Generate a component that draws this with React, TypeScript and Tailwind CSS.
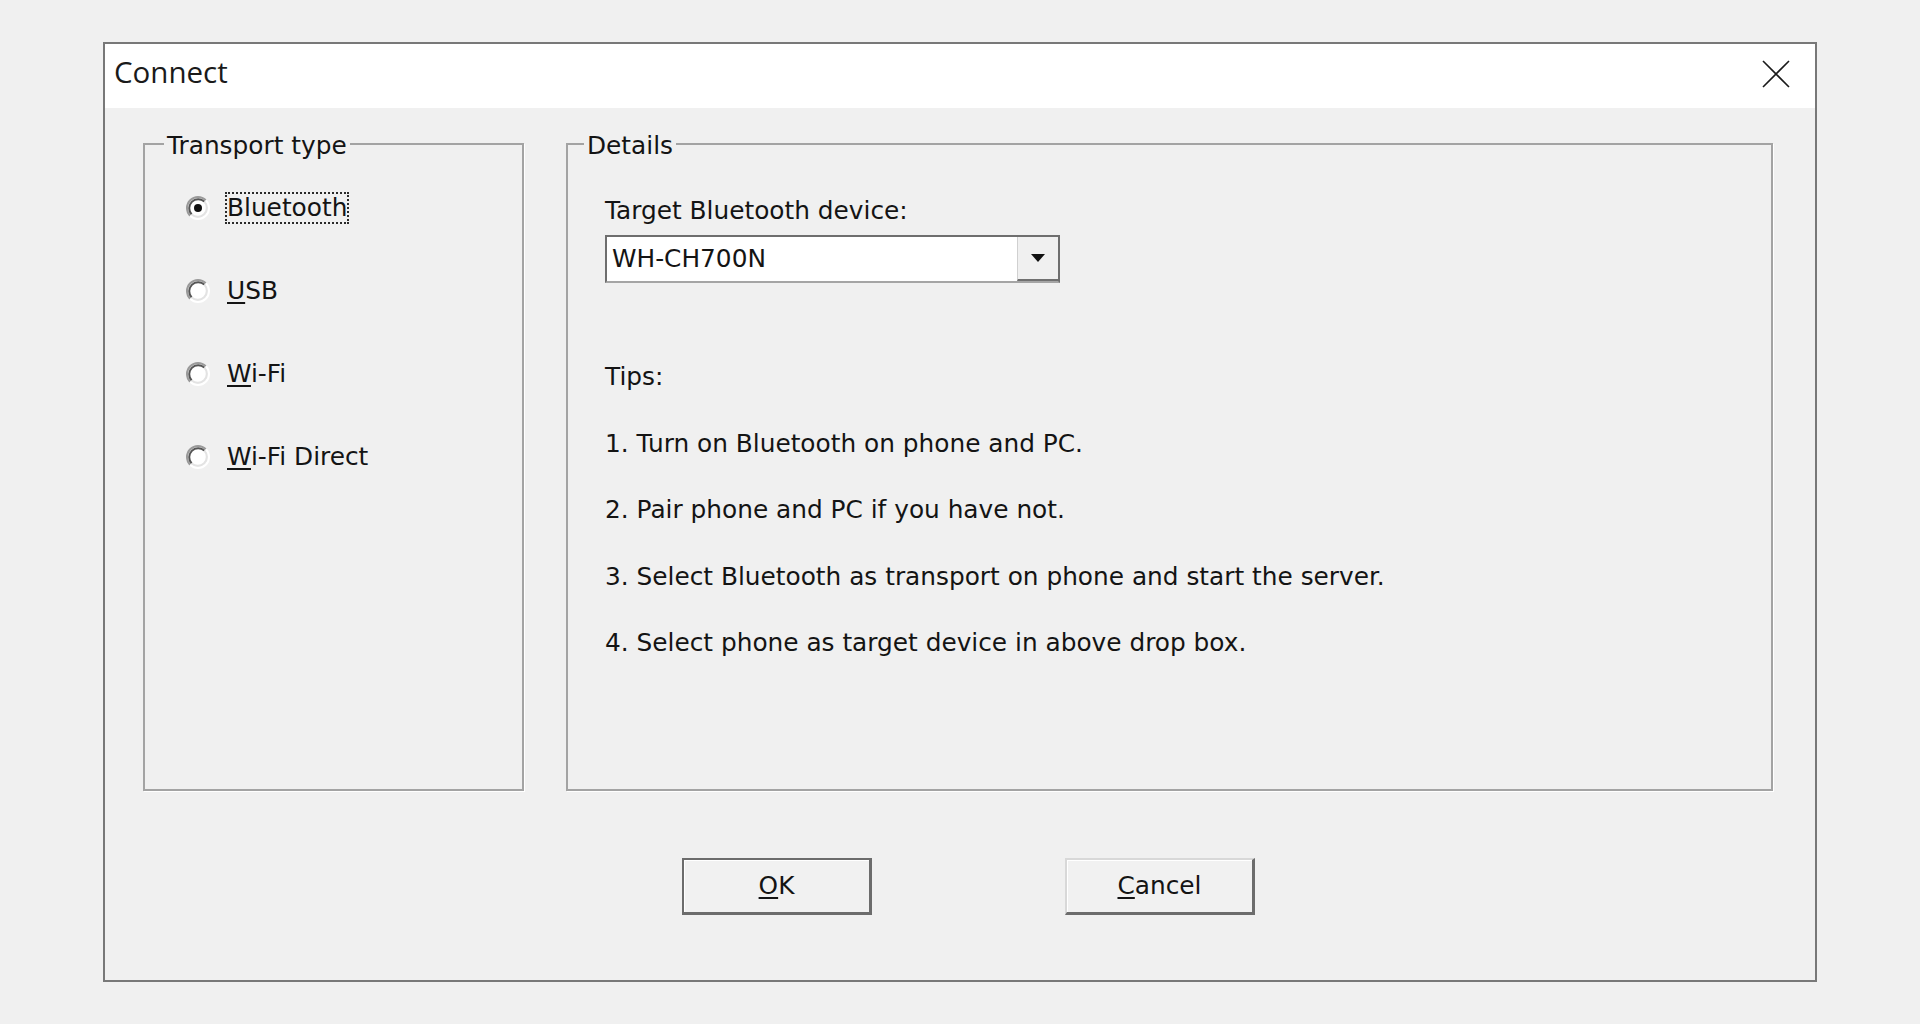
import type { ReactNode } from 'react';

const transports = [
  { id: 'bt', mnemonic: 'B', rest: 'luetooth', checked: true, underline: false },
  { id: 'usb', mnemonic: 'U', rest: 'SB', checked: false, underline: true },
  { id: 'wifi', mnemonic: 'W', rest: 'i-Fi', checked: false, underline: true },
  { id: 'wfd', mnemonic: 'W', rest: 'i-Fi Direct', checked: false, underline: true },
];

const tips = [
  'Tips:',
  '1. Turn on Bluetooth on phone and PC.',
  '2. Pair phone and PC if you have not.',
  '3. Select Bluetooth as transport on phone and start the server.',
  '4. Select phone as target device in above drop box.',
];

function RadioDot({ checked }: { checked: boolean }) {
  return (
    <svg width="26" height="26" viewBox="0 0 26 26" className="shrink-0">
      <circle cx="13" cy="13" r="8.5" fill="#ffffff" />
      <path d="M5.22 20.78 A11 11 0 0 1 20.78 5.22" fill="none" stroke="#9a9a9a" strokeWidth="2" />
      <path d="M20.78 5.22 A11 11 0 0 1 5.22 20.78" fill="none" stroke="#ffffff" strokeWidth="2" />
      <path d="M6.64 19.36 A9 9 0 0 1 19.36 6.64" fill="none" stroke="#555555" strokeWidth="2" />
      <path d="M19.36 6.64 A9 9 0 0 1 6.64 19.36" fill="none" stroke="#e3e3e3" strokeWidth="2" />
      {checked && <circle cx="13" cy="13" r="4" fill="#111111" />}
    </svg>
  );
}

function Mn({ children }: { children: ReactNode }) {
  return <span className="underline decoration-[1.5px] underline-offset-[3px]">{children}</span>;
}

export default function App() {
  return (
    <main className="min-h-screen bg-[#f0f0f0] pt-[42px] pl-[103px] font-['DejaVu_Sans',sans-serif] text-[24.8px] text-[#141414]">
      <div className="w-[1714px] h-[940px] border-2 border-[#787878] bg-[#f0f0f0] flex flex-col">
        {/* Title bar */}
        <div className="h-[64px] bg-white flex items-center justify-between pl-[9px] pr-[25px] pb-[4px]">
          <span className="font-['Open_Sans',sans-serif] text-[29.5px] text-[#1a1a1a] leading-none mb-[4px]">Connect</span>
          <svg width="28" height="28" viewBox="0 0 28 28">
            <path d="M1 1 L27 27 M27 1 L1 27" stroke="#1a1a1a" strokeWidth="1.6" />
          </svg>
        </div>

        {/* Groups */}
        <div className="flex gap-[42px] pl-[38px] pr-[42px] pt-[20px]">
          <fieldset className="w-[381px] h-[663px] border-2 border-[#a3a3a3] shadow-[1px_1px_0_#ffffff]">
            <legend className="ml-[19px] px-[3px] leading-[32px]">
              <span className="relative top-[2px]">Transport type</span>
            </legend>
            <div className="flex flex-col gap-[43px] pt-[28px] pl-[40px]">
              {transports.map((t) => (
                <div key={t.id} className="h-10 flex items-center gap-[14px]">
                  <RadioDot checked={t.checked} />
                  <span
                    className={`leading-[28px] border-2 border-dotted ${t.checked ? 'border-[#2a2a2a]' : 'border-transparent'}`}
                  >
                    {t.underline ? <Mn>{t.mnemonic}</Mn> : t.mnemonic}
                    {t.rest}
                  </span>
                </div>
              ))}
            </div>
          </fieldset>

          <fieldset className="flex-1 h-[663px] border-2 border-[#a3a3a3] shadow-[1px_1px_0_#ffffff]">
            <legend className="ml-[16px] px-[3px] leading-[32px]">
              <span className="relative top-[2px]">Details</span>
            </legend>
            <div className="pl-[37px] pt-[35px] flex flex-col items-start">
              <div className="leading-[32px]">Target Bluetooth device:</div>
              <div className="mt-[8px] w-[455px] h-[48px] bg-white flex border-2 border-[#6e6e6e] border-b-[#a5a5a5]">
                <div className="flex-1 flex items-center pl-[5px] leading-[32px]">WH-CH700N</div>
                <div className="w-[41px] h-full bg-[#f0f0f0] border-l border-[#d0d0d0] border-b-2 border-b-[#707070] flex items-center justify-center">
                  <svg width="14" height="8" viewBox="0 0 14 8">
                    <path d="M0 0 H14 L7 8 Z" fill="#111111" />
                  </svg>
                </div>
              </div>
              <div className="mt-[78px] flex flex-col gap-[34.5px]">
                {tips.map((line) => (
                  <div key={line} className="leading-[32px] whitespace-nowrap">
                    {line}
                  </div>
                ))}
              </div>
            </div>
          </fieldset>
        </div>

        {/* Buttons */}
        <div className="mt-[67px] flex justify-center gap-[193px] pl-[17px]">
          <button className="w-[190px] h-[57px] bg-[#f1f1f1] border-2 border-[#6c6c6c] border-r-[3px] border-b-[3px] shadow-[inset_1px_1px_0_#ffffff] leading-none">
            <Mn>O</Mn>K
          </button>
          <button className="w-[190px] h-[57px] bg-[#f1f1f1] border-t-2 border-l-2 border-t-[#d8d8d8] border-l-[#d8d8d8] border-r-[3px] border-b-[3px] border-r-[#6c6c6c] border-b-[#6c6c6c] shadow-[inset_1px_1px_0_#ffffff] leading-none">
            <Mn>C</Mn>ancel
          </button>
        </div>
      </div>
    </main>
  );
}
